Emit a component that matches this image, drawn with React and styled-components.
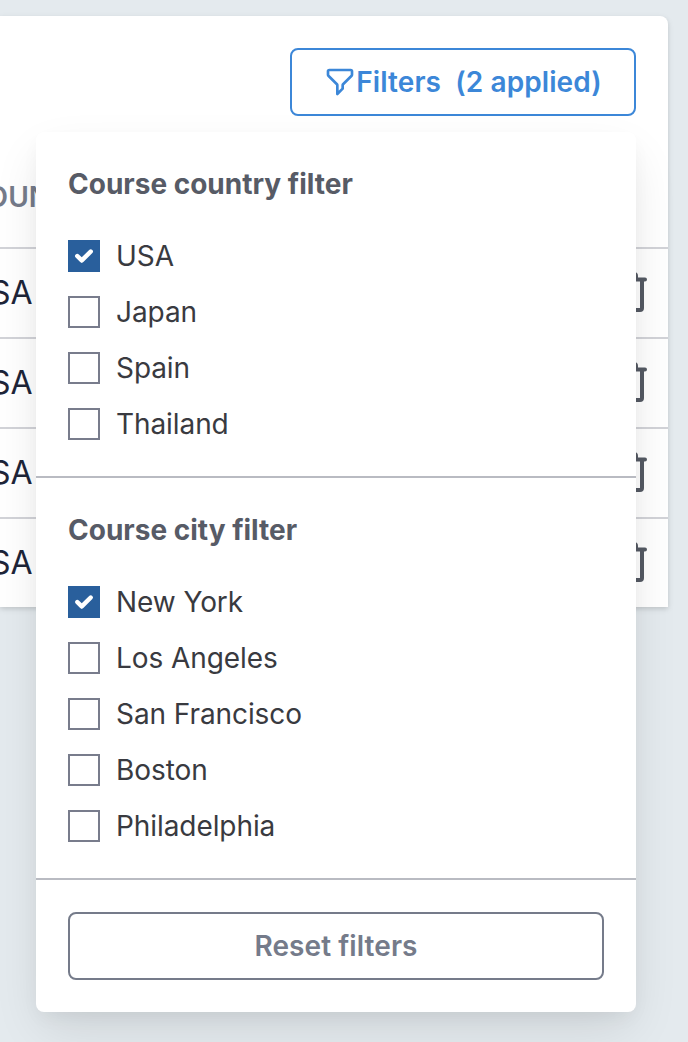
import React from "react";
import styled, { createGlobalStyle } from "styled-components";

const GlobalStyle = createGlobalStyle`
  *, *::before, *::after { box-sizing: border-box; }
  body {
    margin: 0;
    background: #e4eaee;
    font-family: Inter, "Liberation Sans", sans-serif;
    font-size: 28px;
    line-height: 40px;
    overflow: hidden;
  }
`;

const Page = styled.main`
  position: relative;
  height: 1042px;
  padding: 16px 20px 0 0;
  overflow: hidden;
`;

const Card = styled.section`
  height: 591px;
  background: #fff;
  border-top-right-radius: 8px;
  box-shadow: 0 2px 6px rgba(0, 0, 0, 0.1), 0 2px 4px rgba(0, 0, 0, 0.06);
`;

const Toolbar = styled.div`
  display: flex;
  justify-content: flex-end;
  padding: 32px 32px 0 0;
`;

const Button = styled.button`
  display: flex;
  align-items: center;
  justify-content: center;
  width: ${(p) => p.$width};
  height: 68px;
  padding: 0 32px;
  border: 2px solid ${(p) => p.$color};
  border-radius: 8px;
  background: #fff;
  color: ${(p) => p.$color};
  font: inherit;
  font-weight: 600;
  letter-spacing: 0.08px;
  white-space: pre;
`;

const FilterSvg = styled.svg`
  flex: none;
  width: 32px;
  height: 32px;
`;

const HeaderRow = styled.div`
  display: flex;
  align-items: center;
  height: 131px;
  padding-top: 30px;
  color: #757b8a;
  font-weight: 600;
`;

const Row = styled.div`
  display: flex;
  align-items: center;
  justify-content: space-between;
  height: 90px;
  padding-right: 19px;
  border-top: 2px solid #d2d3d8;
  color: #1e2539;
  font-size: 32px;
`;

const Clipped = styled.span`
  display: flex;
  justify-content: flex-end;
  width: ${(p) => p.$width}px;
  overflow: hidden;
  white-space: nowrap;
`;

const TrashSvg = styled.svg`
  width: 48px;
  height: 48px;
`;

const Menu = styled.aside`
  position: absolute;
  top: 132px;
  left: 36px;
  width: 600px;
  height: 880px;
  border-radius: 8px;
  background: #fff;
  box-shadow: 0 20px 50px -6px rgba(0, 0, 0, 0.11), 0 8px 20px -4px rgba(0, 0, 0, 0.05);
`;

const Group = styled.div`
  padding: 32px;
  border-bottom: 2px solid #b9bbc2;
`;

const Heading = styled.h3`
  margin: 0 0 32px;
  color: #575b66;
  font-size: 28px;
  font-weight: 700;
  line-height: 40px;
`;

const Options = styled.div`
  display: flex;
  flex-direction: column;
  gap: 16px;
`;

const Option = styled.label`
  display: flex;
  align-items: center;
  gap: 16px;
  height: 40px;
  color: #393a40;
  letter-spacing: -0.08px;
`;

const Box = styled.span`
  flex: none;
  width: 32px;
  height: 32px;
  border: 2px solid ${(p) => (p.$checked ? "#295f9c" : "#787c8c")};
  background: ${(p) => (p.$checked ? "#295f9c" : "#fff")};
`;

const Tick = styled.svg`
  display: block;
  width: 36px;
  height: 36px;
  margin: -4px;
`;

const Footer = styled.div`
  padding: 32px;
`;

const FilterIcon = () => (
  <FilterSvg viewBox="0 0 24 24" fill="none" stroke="currentColor" strokeWidth="2" strokeLinecap="round" strokeLinejoin="round">
    <path d="M3 4a1 1 0 0 1 1-1h16a1 1 0 0 1 1 1v2.586a1 1 0 0 1-.293.707l-6.414 6.414a1 1 0 0 0-.293.707V17l-4 4v-6.586a1 1 0 0 0-.293-.707L3.293 7.293A1 1 0 0 1 3 6.586V4z" />
  </FilterSvg>
);

const TrashIcon = () => (
  <TrashSvg viewBox="0 0 48 48" fill="none" stroke="#555a64" strokeWidth="4" strokeLinecap="round" strokeLinejoin="round">
    <path d="M6 10.500h38M10 10.500v27.500a3 3 0 0 0 3 3h26a2 2 0 0 0 2-2V10.500M16 10V7a2 2 0 0 1 2-2h15a2 2 0 0 1 2 2v3" />
  </TrashSvg>
);

const groups = [
  { title: "Course country filter", items: ["USA", "Japan", "Spain", "Thailand"] },
  { title: "Course city filter", items: ["New York", "Los Angeles", "San Francisco", "Boston", "Philadelphia"] },
];

export default function App() {
  return (
    <>
      <GlobalStyle />
      <Page>
        <Card>
          <Toolbar>
            <Button $width="346px" $color="#3c87d8">
              <FilterIcon />
              <span>{"Filters  (2 applied)"}</span>
            </Button>
          </Toolbar>
          <HeaderRow>
            <Clipped $width={50}>OUN</Clipped>
          </HeaderRow>
          {[0, 1, 2, 3].map((n) => (
            <Row key={n}>
              <Clipped $width={32.5}>USA</Clipped>
              <TrashIcon />
            </Row>
          ))}
        </Card>
        <Menu>
          {groups.map((group) => (
            <Group key={group.title}>
              <Heading>{group.title}</Heading>
              <Options>
                {group.items.map((item, i) => (
                  <Option key={item}>
                    <Box $checked={i === 0}>
                      {i === 0 && (
                        <Tick viewBox="0 0 16 16" fill="#fff">
                          <path d="M5.707 7.293a1 1 0 0 0-1.414 1.414l2 2a1 1 0 0 0 1.414 0l4-4a1 1 0 0 0-1.414-1.414L7 8.586 5.707 7.293z" />
                        </Tick>
                      )}
                    </Box>
                    {item}
                  </Option>
                ))}
              </Options>
            </Group>
          ))}
          <Footer>
            <Button $width="536px" $color="#757b8a">Reset filters</Button>
          </Footer>
        </Menu>
      </Page>
    </>
  );
}
